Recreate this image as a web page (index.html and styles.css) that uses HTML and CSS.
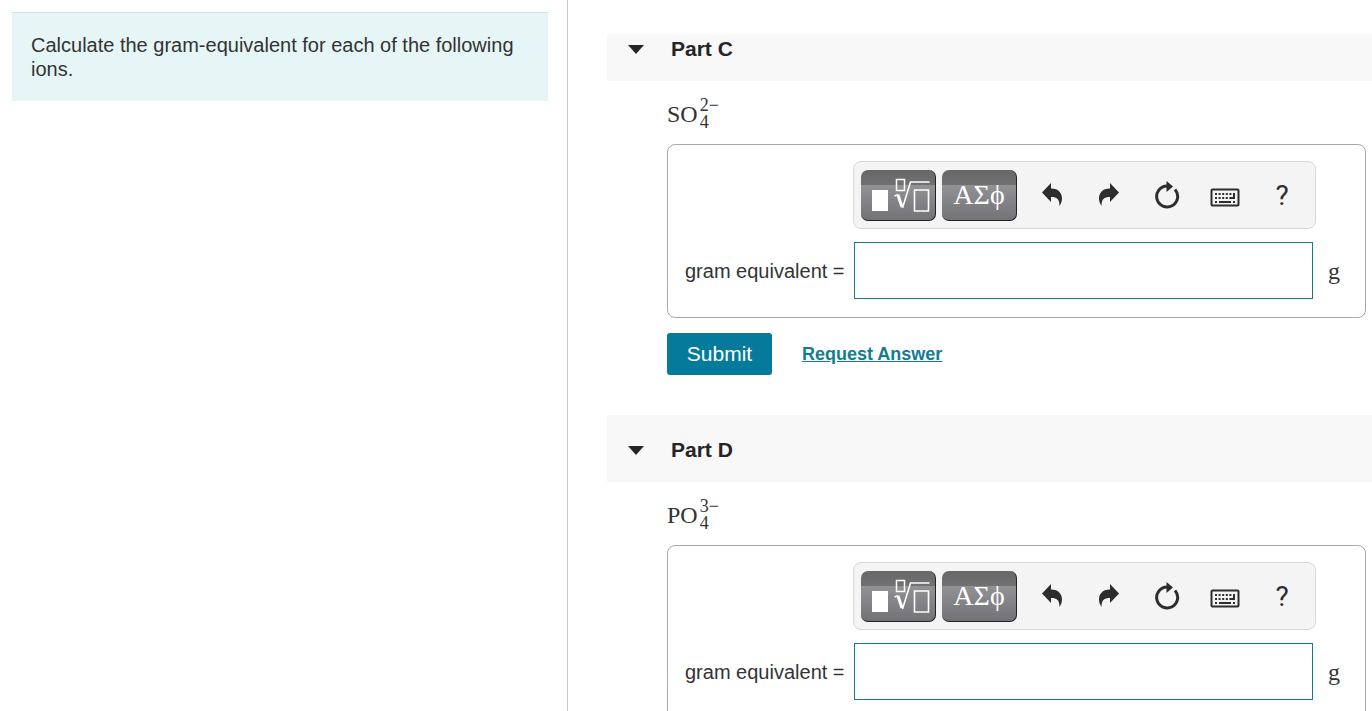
FILE: index.html
```html
<!DOCTYPE html>
<html lang="en">
<head>
    <meta charset="UTF-8">
    <meta name="viewport" content="width=device-width, initial-scale=1.0">
    <title>Gram-equivalents of ions</title>
    <link rel="stylesheet" href="styles.css">
</head>
<body>
    <!-- Icons shared by both toolbars -->
    <svg class="icon-defs" aria-hidden="true">
        <symbol id="icon-template" viewBox="0 0 75 51">
            <path d="M11 20h16v21h-16z" fill="#fff"/>
            <g fill="none" stroke="#fff">
                <path d="M35.500 9.500h8v11h-8z" stroke-width="1.5"/>
                <path d="M53.500 20h14v21h-14z" stroke-width="1.6"/>
                <path d="M33.500 26l4-1.500" stroke-width="1.5"/>
                <path d="M37 25l4 12" stroke-width="3"/>
                <path d="M41.500 38l8-26h19" stroke-width="1.600"/>
            </g>
        </symbol>
        <symbol id="icon-undo" viewBox="0 0 24 26">
            <path d="M2 10.500L11 1v5.500c8 0 11 5 11 10 0 3-1 5-2.500 7.500C19.500 17 17 15 11 15v5z"/>
        </symbol>
        <symbol id="icon-redo" viewBox="0 0 24 26">
            <path d="M22 10.500L13 1v5.500c-8 0-11 5-11 10 0 3 1 5 2.500 7.500C4.500 17 7 15 13 15v5z"/>
        </symbol>
        <symbol id="icon-reset" viewBox="0 0 26 30">
            <path d="M21 9.500A10.500 10.500 0 1 1 13 6" fill="none" stroke="currentColor" stroke-width="3"/>
            <path d="M12.500 1l6.500 5.500-6.500 5.500z"/>
        </symbol>
        <symbol id="icon-keyboard" viewBox="0 0 30 20">
            <rect x="1.500" y="1.500" width="27" height="16" rx="1" fill="none" stroke="currentColor" stroke-width="2"/>
            <path d="M5 6h20M5 10h18" fill="none" stroke="currentColor" stroke-width="2" stroke-dasharray="2 1.600"/>
            <path d="M23 5h2v6h-4v-2h2zM5 13h2v2h-2zM9 13h12v2h-12zM23 13h2v2h-2z"/>
        </symbol>
    </svg>

    <div class="page">
        <aside class="intro">
            <p class="question">Calculate the gram-equivalent for each of the following ions.</p>
        </aside>

        <main class="parts">
            <!-- Part C -->
            <section class="part">
                <h2 class="part-header part-header-first">
                    <button type="button" class="part-toggle"><span class="arrow"></span>Part C</button>
                </h2>
                <div class="part-body">
                    <p class="formula">SO<span class="scripts"><span>2−</span><span>4</span></span></p>
                    <form>
                        <div class="answer">
                            <div class="toolbar">
                                <button type="button" class="tool-dark" aria-label="Templates"><svg width="75" height="51"><use href="#icon-template"/></svg></button>
                                <button type="button" class="tool-dark">ΑΣϕ</button>
                                <button type="button" class="tool" aria-label="Undo"><svg width="24" height="26"><use href="#icon-undo"/></svg></button>
                                <button type="button" class="tool" aria-label="Redo"><svg width="24" height="26"><use href="#icon-redo"/></svg></button>
                                <button type="button" class="tool" aria-label="Reset"><svg width="26" height="30"><use href="#icon-reset"/></svg></button>
                                <button type="button" class="tool tool-keyboard" aria-label="Keyboard"><svg width="30" height="20"><use href="#icon-keyboard"/></svg></button>
                                <button type="button" class="tool">?</button>
                            </div>
                            <label for="answerC">gram equivalent =</label>
                            <input type="text" id="answerC" name="answerC">
                            <span class="unit">g</span>
                        </div>
                        <div class="actions">
                            <button type="submit" class="submit">Submit</button>
                            <a href="#">Request Answer</a>
                        </div>
                    </form>
                </div>
            </section>

            <!-- Part D -->
            <section class="part">
                <h2 class="part-header">
                    <button type="button" class="part-toggle"><span class="arrow"></span>Part D</button>
                </h2>
                <div class="part-body">
                    <p class="formula">PO<span class="scripts"><span>3−</span><span>4</span></span></p>
                    <form>
                        <div class="answer">
                            <div class="toolbar">
                                <button type="button" class="tool-dark" aria-label="Templates"><svg width="75" height="51"><use href="#icon-template"/></svg></button>
                                <button type="button" class="tool-dark">ΑΣϕ</button>
                                <button type="button" class="tool" aria-label="Undo"><svg width="24" height="26"><use href="#icon-undo"/></svg></button>
                                <button type="button" class="tool" aria-label="Redo"><svg width="24" height="26"><use href="#icon-redo"/></svg></button>
                                <button type="button" class="tool" aria-label="Reset"><svg width="26" height="30"><use href="#icon-reset"/></svg></button>
                                <button type="button" class="tool tool-keyboard" aria-label="Keyboard"><svg width="30" height="20"><use href="#icon-keyboard"/></svg></button>
                                <button type="button" class="tool">?</button>
                            </div>
                            <label for="answerD">gram equivalent =</label>
                            <input type="text" id="answerD" name="answerD">
                            <span class="unit">g</span>
                        </div>
                    </form>
                </div>
            </section>
        </main>
    </div>
</body>
</html>
```
FILE: styles.css
```css
* {
    box-sizing: border-box;
}

body {
    margin: 0;
    font-family: "Liberation Sans", Arial, sans-serif;
    font-size: 20px;
    line-height: 24px;
    color: #333;
    background-color: #fff;
}

button {
    font-family: inherit;
    border: none;
    cursor: pointer;
}

.icon-defs {
    display: none;
}

/* Two panes */
.page {
    display: flex;
    height: 100vh;
    overflow: hidden;
}

.intro {
    flex: 0 0 568px;
    padding: 12px 19px 12px 12px;
    border-right: 1px solid #c6c8d8;
}

.question {
    margin: 0;
    padding: 20px 19px;
    border-top: 1px solid #d0dfe4;
    background-color: #e6f6f6;
}

.parts {
    flex: 1;
    min-width: 0;
    padding: 34px 0 0 39px;
}

/* Part header */
.part-header {
    margin: 0;
    height: 67px;
    padding: 23px 21px;
    background-color: #f8f8f8;
}

.part-header-first {
    height: 47px;
    padding-top: 3px;
}

.part-toggle {
    display: flex;
    align-items: center;
    gap: 27px;
    padding: 0;
    background: none;
    color: #252525;
    font-size: 21px;
    font-weight: bold;
    line-height: 24px;
}

.arrow {
    border: 8px solid transparent;
    border-top: 9px solid #252525;
    border-bottom: 0;
}

.part-body {
    padding: 0 6px 40px 60px;
}

.formula {
    display: flex;
    align-items: center;
    height: 63px;
    margin: 0;
    padding-top: 2px;
    font-family: "Liberation Serif", serif;
    font-size: 24px;
}

.scripts {
    display: flex;
    flex-direction: column;
    margin-left: 2px;
    font-size: 18px;
    line-height: 17px;
}

/* Answer box */
.answer {
    display: grid;
    grid-template-columns: 168px 1fr 12px;
    row-gap: 13px;
    align-items: center;
    padding: 16px 25px 18px 17px;
    border: 1px solid #aaa;
    border-radius: 8px;
}

.toolbar {
    grid-column: 2;
    display: flex;
    align-items: center;
    height: 68px;
    margin-right: 12px;
    padding: 0 4px 0 7px;
    border: 1px solid #d8d8d8;
    border-radius: 8px;
    background-color: #f4f4f4;
}

.tool-dark {
    width: 75px;
    height: 51px;
    margin-right: 6px;
    padding: 0;
    border-right: 1px solid #222;
    border-bottom: 1px solid #222;
    border-radius: 7px;
    background: linear-gradient(#676767 0, #717171 15px, #919196 15px, #727277 100%);
    color: #fff;
    font-family: "Liberation Serif", serif;
    font-size: 28px;
}

.tool-dark svg,
.tool svg {
    display: block;
    margin: auto;
}

.tool {
    flex: 1;
    padding: 0;
    background: none;
    color: #2d2d2d;
    fill: currentColor;
    font-family: Roboto, sans-serif;
    font-size: 28px;
}

.tool-keyboard {
    padding-top: 6px;
}

.answer label {
    grid-column: 1;
}

.answer input {
    width: calc(100% - 16px);
    height: 57px;
    margin-left: 1px;
    padding: 8px;
    border: 1px solid #127c91;
    font-size: 20px;
}

.unit {
    font-family: "Liberation Serif", serif;
    font-size: 24px;
}

.actions {
    display: flex;
    align-items: center;
    gap: 30px;
    margin-top: 15px;
}

.submit {
    width: 105px;
    height: 42px;
    border-radius: 3px;
    background-color: #057a9a;
    color: #fff;
    font-size: 21px;
}

.actions a {
    color: #127c91;
    font-size: 18px;
    font-weight: bold;
}
```
